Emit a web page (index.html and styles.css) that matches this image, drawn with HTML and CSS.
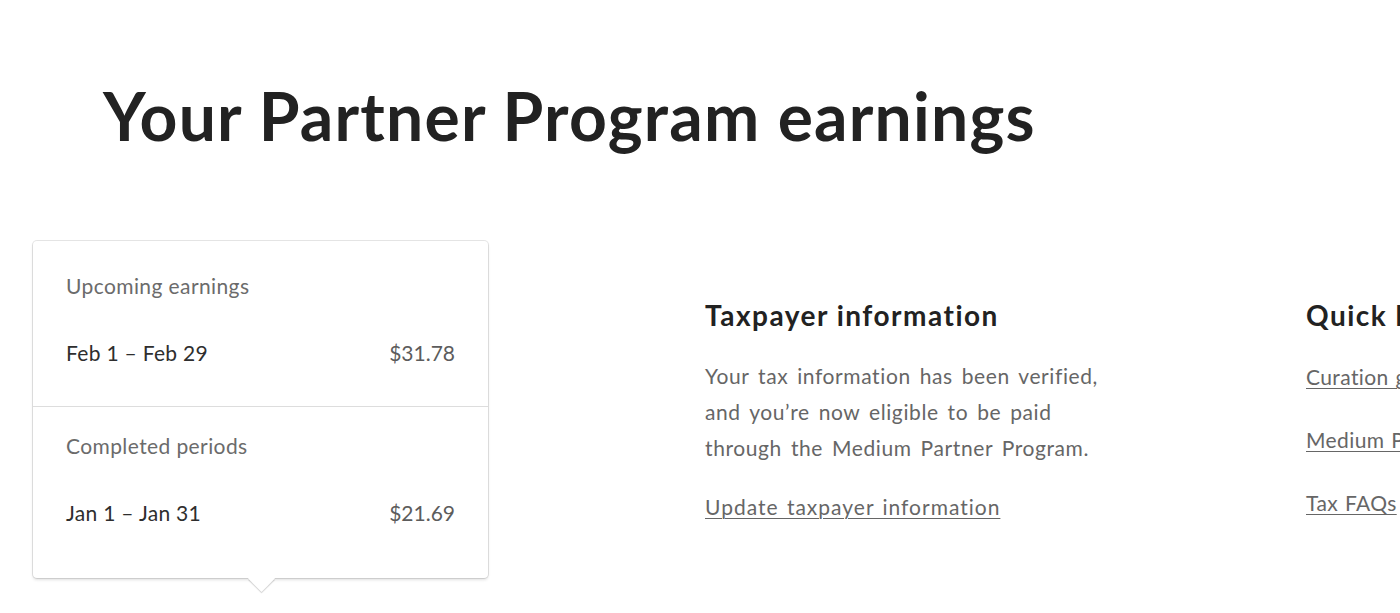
FILE: index.html
```html
<!DOCTYPE html>
<html>
<head>
<meta charset="utf-8">
<link rel="stylesheet" href="styles.css">
</head>
<body>
<main class="page">
  <h1 class="title">Your Partner Program earnings</h1>
  <div class="columns">
    <div class="card-wrap">
      <div class="card">
        <section class="period first">
          <div class="label">Upcoming earnings</div>
          <div class="row"><span class="range">Feb 1 – Feb 29</span><span class="amount">$31.78</span></div>
        </section>
        <section class="period second">
          <div class="label">Completed periods</div>
          <div class="row"><span class="range">Jan 1 – Jan 31</span><span class="amount">$21.69</span></div>
        </section>
      </div>
      <div class="arrow"></div>
    </div>
    <div class="tax">
      <h2 class="heading">Taxpayer information</h2>
      <p class="text">Your tax information has been verified, and you’re now eligible to be paid through the Medium Partner Program.</p>
      <a class="link update" href="#">Update taxpayer information</a>
    </div>
    <div class="quick">
      <h2 class="heading">Quick links</h2>
      <ul class="links">
        <li><a class="link" href="#">Curation guidelines</a></li>
        <li><a class="link" href="#">Medium Partner Program</a></li>
        <li><a class="link" href="#">Tax FAQs</a></li>
      </ul>
    </div>
  </div>
</main>
</body>
</html>
```

FILE: styles.css
```css
html, body {
  margin: 0;
  padding: 0;
  background: #fff;
  overflow: hidden;
}
body {
  font-family: Lato, "Liberation Sans", sans-serif;
  color: #292929;
}
.page {
  width: 1400px;
  height: 613px;
  overflow: hidden;
}
.title {
  margin: 0;
  padding: 76px 0 0 103px;
  font-size: 66px;
  line-height: 80px;
  font-weight: 700;
  letter-spacing: 1.2px;
  color: #222;
  white-space: nowrap;
}
.columns {
  display: flex;
  align-items: flex-start;
  padding: 85px 0 0 33px;
  white-space: nowrap;
}
.card-wrap {
  position: relative;
  width: 455px;
  flex: none;
}
.card {
  border-radius: 4px;
  background: #fff;
  box-shadow: 0 0 0 1px rgba(0,0,0,0.1), 0 2px 3px rgba(0,0,0,0.12);
}
.period {
  padding: 0 33px;
}
.period.first {
  padding-top: 31px;
  padding-bottom: 39px;
  border-bottom: 1px solid #ddd;
}
.period.second {
  padding-top: 25px;
  padding-bottom: 51px;
}
.label, .row, .text, .link {
  font-size: 21px;
}
.label {
  line-height: 28px;
  letter-spacing: 0.4px;
  color: #6b6b6b;
}
.row {
  display: flex;
  justify-content: space-between;
  margin-top: 39px;
  line-height: 28px;
  letter-spacing: 0.3px;
}
.range {
  color: #2e2e2e;
}
.amount {
  color: #5c5c5c;
  letter-spacing: 0;
}
.arrow {
  position: absolute;
  left: 219px;
  bottom: -10px;
  width: 19px;
  height: 19px;
  background: #fff;
  transform: rotate(45deg);
  box-shadow: 1px 1px 1px rgba(0,0,0,0.18);
}
.tax {
  margin-left: 217px;
  width: 420px;
  flex: none;
}
.heading {
  margin: 55px 0 0;
  font-size: 28px;
  line-height: 38px;
  font-weight: 700;
  letter-spacing: 1.5px;
  color: #222;
}
.text {
  margin: 24px 0 0;
  line-height: 36px;
  color: #666;
  white-space: normal;
  width: 405px;
  letter-spacing: 0.6px;
  word-spacing: 3px;
}
.link {
  display: inline-block;
  line-height: 36px;
  color: #666;
  letter-spacing: 0.4px;
  word-spacing: 1px;
  text-decoration: underline;
  text-underline-offset: 3px;
  text-decoration-thickness: 1px;
}
.update {
  margin-top: 23px;
  letter-spacing: 1px;
  word-spacing: 2px;
}
.quick {
  margin-left: 181px;
  flex: none;
}
.links {
  list-style: none;
  margin: 25px 0 0;
  padding: 0;
  display: flex;
  flex-direction: column;
  gap: 27px;
}
```
